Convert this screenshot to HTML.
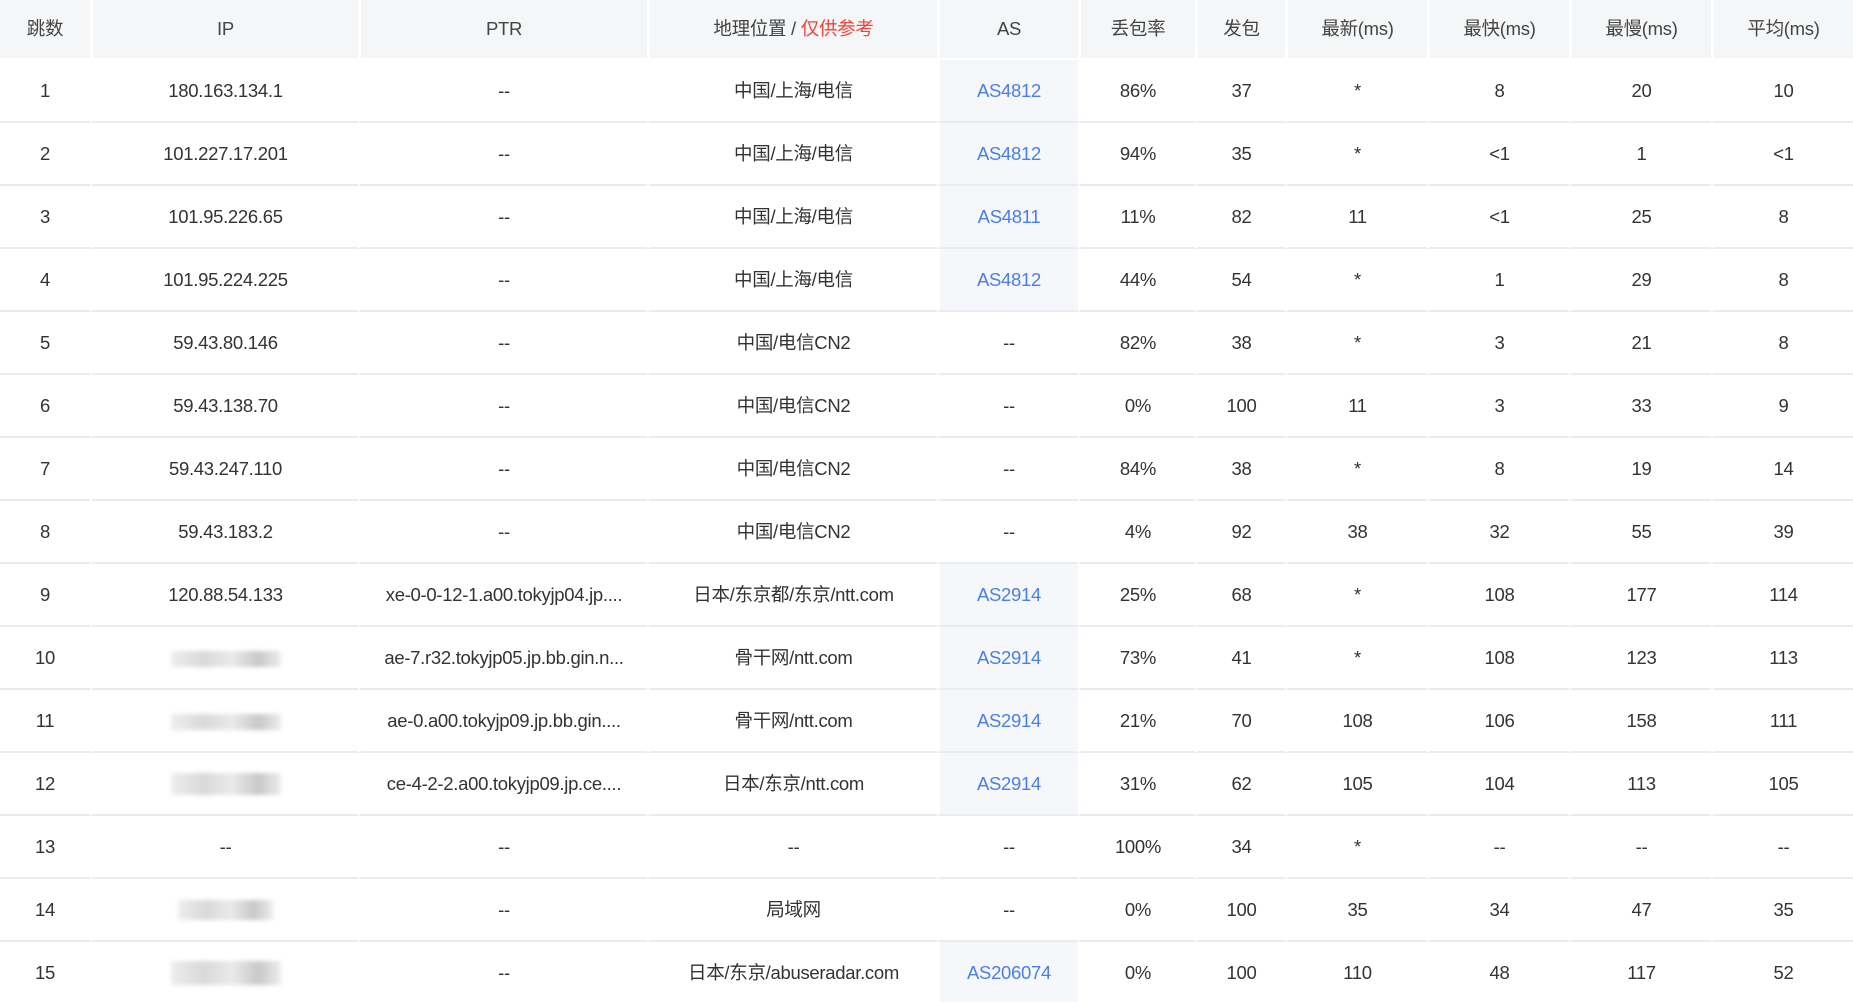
<!DOCTYPE html>
<html><head><meta charset="utf-8"><style>
html,body{margin:0;padding:0;background:#fff;width:1853px;height:1002px;overflow:hidden}
table{border-collapse:separate;border-spacing:0;table-layout:fixed;width:1853px;font-family:"Liberation Sans","Noto Sans CJK SC",sans-serif;font-size:18.5px;color:#333;letter-spacing:-0.3px}
th{height:58px;background:#f5f6f7;font-weight:normal;color:#444;border-left:3px solid #fff;border-bottom:2px solid #fff;padding:0;line-height:20px}
td{height:61px;line-height:20px;text-align:center;border-left:3px solid #fff;border-bottom:2px solid #e8ecef;padding:0;white-space:nowrap;overflow:hidden}
th:first-child,td:first-child{border-left:0}
td.as{background:#f5f7fb;color:#4a7ee8}
.red{color:#f0453a}
.blur{display:inline-block;width:110px;height:16px;background:linear-gradient(90deg,#eee,#d9d9d9 30%,#eaeaea 55%,#c8c8c8 80%,#eee);filter:blur(2px);vertical-align:middle}
</style></head><body>
<table>
<colgroup><col style="width:90px"><col style="width:268px"><col style="width:289px"><col style="width:290px"><col style="width:141px"><col style="width:117px"><col style="width:90px"><col style="width:142px"><col style="width:142px"><col style="width:142px"><col style="width:142px"></colgroup>
<tr><th>跳数</th><th>IP</th><th>PTR</th><th>地理位置 / <span class="red">仅供参考</span></th><th>AS</th><th>丢包率</th><th>发包</th><th>最新(ms)</th><th>最快(ms)</th><th>最慢(ms)</th><th>平均(ms)</th></tr>
<tr><td>1</td><td>180.163.134.1</td><td>--</td><td>中国/上海/电信</td><td class="as">AS4812</td><td>86%</td><td>37</td><td>*</td><td>8</td><td>20</td><td>10</td></tr>
<tr><td>2</td><td>101.227.17.201</td><td>--</td><td>中国/上海/电信</td><td class="as">AS4812</td><td>94%</td><td>35</td><td>*</td><td>&lt;1</td><td>1</td><td>&lt;1</td></tr>
<tr><td>3</td><td>101.95.226.65</td><td>--</td><td>中国/上海/电信</td><td class="as">AS4811</td><td>11%</td><td>82</td><td>11</td><td>&lt;1</td><td>25</td><td>8</td></tr>
<tr><td>4</td><td>101.95.224.225</td><td>--</td><td>中国/上海/电信</td><td class="as">AS4812</td><td>44%</td><td>54</td><td>*</td><td>1</td><td>29</td><td>8</td></tr>
<tr><td>5</td><td>59.43.80.146</td><td>--</td><td>中国/电信CN2</td><td>--</td><td>82%</td><td>38</td><td>*</td><td>3</td><td>21</td><td>8</td></tr>
<tr><td>6</td><td>59.43.138.70</td><td>--</td><td>中国/电信CN2</td><td>--</td><td>0%</td><td>100</td><td>11</td><td>3</td><td>33</td><td>9</td></tr>
<tr><td>7</td><td>59.43.247.110</td><td>--</td><td>中国/电信CN2</td><td>--</td><td>84%</td><td>38</td><td>*</td><td>8</td><td>19</td><td>14</td></tr>
<tr><td>8</td><td>59.43.183.2</td><td>--</td><td>中国/电信CN2</td><td>--</td><td>4%</td><td>92</td><td>38</td><td>32</td><td>55</td><td>39</td></tr>
<tr><td>9</td><td>120.88.54.133</td><td>xe-0-0-12-1.a00.tokyjp04.jp....</td><td>日本/东京都/东京/ntt.com</td><td class="as">AS2914</td><td>25%</td><td>68</td><td>*</td><td>108</td><td>177</td><td>114</td></tr>
<tr><td>10</td><td><span class="blur"></span></td><td>ae-7.r32.tokyjp05.jp.bb.gin.n...</td><td>骨干网/ntt.com</td><td class="as">AS2914</td><td>73%</td><td>41</td><td>*</td><td>108</td><td>123</td><td>113</td></tr>
<tr><td>11</td><td><span class="blur"></span></td><td>ae-0.a00.tokyjp09.jp.bb.gin....</td><td>骨干网/ntt.com</td><td class="as">AS2914</td><td>21%</td><td>70</td><td>108</td><td>106</td><td>158</td><td>111</td></tr>
<tr><td>12</td><td><span class="blur" style="height:22px"></span></td><td>ce-4-2-2.a00.tokyjp09.jp.ce....</td><td>日本/东京/ntt.com</td><td class="as">AS2914</td><td>31%</td><td>62</td><td>105</td><td>104</td><td>113</td><td>105</td></tr>
<tr><td>13</td><td>--</td><td>--</td><td>--</td><td>--</td><td>100%</td><td>34</td><td>*</td><td>--</td><td>--</td><td>--</td></tr>
<tr><td>14</td><td><span class="blur" style="width:95px;height:20px"></span></td><td>--</td><td>局域网</td><td>--</td><td>0%</td><td>100</td><td>35</td><td>34</td><td>47</td><td>35</td></tr>
<tr><td>15</td><td><span class="blur" style="height:24px"></span></td><td>--</td><td>日本/东京/abuseradar.com</td><td class="as">AS206074</td><td>0%</td><td>100</td><td>110</td><td>48</td><td>117</td><td>52</td></tr>
</table>
</body></html>
